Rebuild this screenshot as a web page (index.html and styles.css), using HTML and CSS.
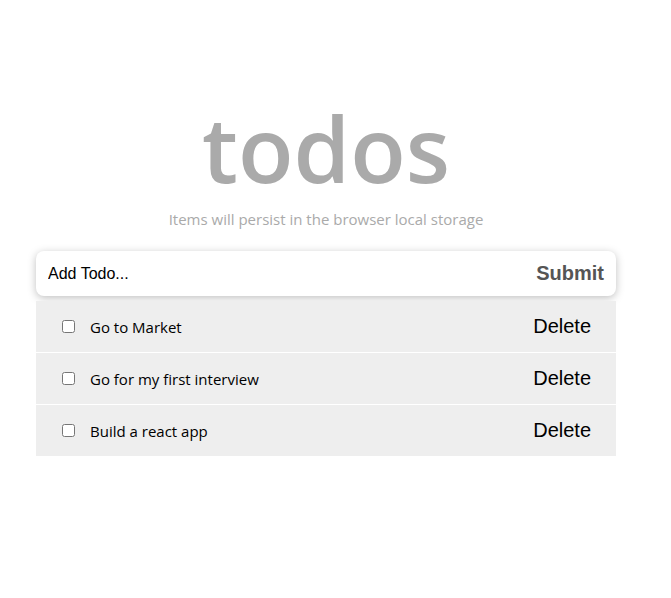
FILE: index.html
```html
<!DOCTYPE html>
<html lang="en">
<head>
<meta charset="utf-8">
<title>todos</title>
<link rel="stylesheet" href="styles.css">
</head>
<body>
<main class="app">
  <h1 class="title">todos</h1>
  <p class="subtitle">Items will persist in the browser local storage</p>
  <form class="add-form">
    <input class="add-input" type="text" placeholder="Add Todo...">
    <button class="submit-btn" type="button">Submit</button>
  </form>
  <ul class="todo-list">
    <li class="todo-item">
      <input class="todo-check" type="checkbox">
      <span class="todo-text">Go to Market</span>
      <button class="delete-btn" type="button">Delete</button>
    </li>
    <li class="todo-item">
      <input class="todo-check" type="checkbox">
      <span class="todo-text">Go for my first interview</span>
      <button class="delete-btn" type="button">Delete</button>
    </li>
    <li class="todo-item">
      <input class="todo-check" type="checkbox">
      <span class="todo-text">Build a react app</span>
      <button class="delete-btn" type="button">Delete</button>
    </li>
  </ul>
</main>
</body>
</html>
```

FILE: styles.css
```css
html, body {
  margin: 0;
  padding: 0;
  background: #ffffff;
}

body {
  font-family: "Open Sans", "Noto Sans", sans-serif;
}

.app {
  width: 580px;
  margin: 0 0 0 36px;
  padding-top: 88px;
}

.title {
  margin: 0;
  text-align: center;
  font-size: 91px;
  font-weight: 600;
  line-height: 121px;
  color: #aaaaaa;
  letter-spacing: 0;
}

.subtitle {
  margin: 0;
  text-align: center;
  font-size: 15px;
  line-height: 20px;
  color: #aaaaaa;
}

.add-form {
  margin-top: 22px;
  height: 45px;
  display: flex;
  align-items: center;
  background: #ffffff;
  border-radius: 8px;
  box-shadow: 0 2px 8px rgba(0, 0, 0, 0.25);
  padding: 0 12px;
  box-sizing: border-box;
}

.add-input {
  flex: 1;
  border: none;
  outline: none;
  background: transparent;
  font-family: "Liberation Sans", Arial, sans-serif;
  font-size: 16px;
  padding: 0;
  color: #000;
}

.add-input::placeholder {
  color: #000000;
  opacity: 1;
}

.submit-btn {
  border: none;
  background: transparent;
  font-family: "Liberation Sans", Arial, sans-serif;
  font-size: 20px;
  font-weight: bold;
  color: #555555;
  padding: 0;
  cursor: pointer;
}

.todo-list {
  list-style: none;
  margin: 5px 0 0 0;
  padding: 0;
  display: flex;
  flex-direction: column;
  gap: 1px;
}

.todo-item {
  height: 51px;
  display: flex;
  align-items: center;
  background: #eeeeee;
  padding: 0 25px 0 26px;
}

.todo-check {
  width: 13px;
  height: 13px;
  margin: 0 15px 0 0;
}

.todo-text {
  flex: 1;
  font-size: 15px;
  color: #000000;
}

.delete-btn {
  border: none;
  background: transparent;
  font-family: "Liberation Sans", Arial, sans-serif;
  font-size: 20px;
  color: #000000;
  padding: 0;
  cursor: pointer;
}
```
